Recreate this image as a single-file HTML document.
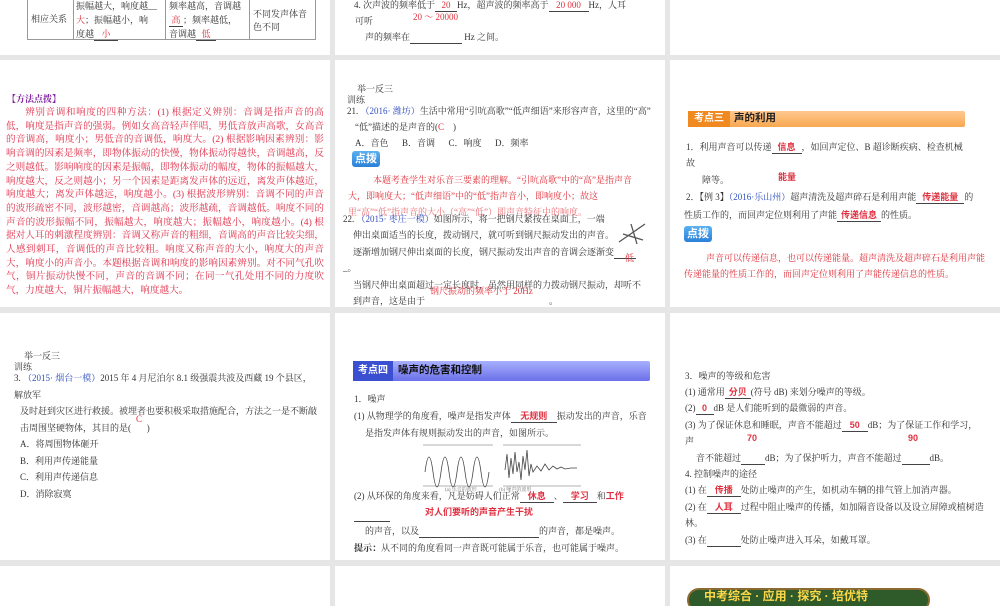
<!DOCTYPE html>
<html><head><meta charset="utf-8"><style>
*{margin:0;padding:0;box-sizing:border-box}
body{width:1000px;height:600px;background:#e6e6e6;position:relative;overflow:hidden;font-family:"Liberation Serif","Noto Serif CJK SC",serif;color:#333}
.s{position:absolute;background:#fff;overflow:hidden}
.t{position:absolute;white-space:nowrap;font-size:9px;line-height:11px}
.r{color:#e0303a}
.b{color:#3050c0}
.red{color:#e03040;font-weight:bold;font-family:"Liberation Sans","Noto Sans CJK SC",sans-serif}
.u{display:inline-block;border-bottom:1px solid #444;text-align:center}
.badge{position:absolute;background:linear-gradient(#5ab0f0,#2a80d8);color:#fff;font-weight:bold;font-size:11px;font-family:"Liberation Sans","Noto Sans CJK SC",sans-serif;padding:1px 3px;border-radius:3px;line-height:14px}
</style></head><body>
<!-- row1 -->
<div class="s" style="left:0;top:0;width:330px;height:55px">
 <div style="position:absolute;left:27px;top:-2px;width:289px;height:42px;border:1px solid #999"></div>
 <div style="position:absolute;left:73px;top:0;width:1px;height:40px;background:#999"></div>
 <div style="position:absolute;left:165px;top:0;width:1px;height:40px;background:#999"></div>
 <div style="position:absolute;left:249px;top:0;width:1px;height:40px;background:#999"></div>
 <div class="t" style="left:31px;top:14px">相应关系</div>
 <div class="t" style="left:76px;top:1px">振幅越大，响度越__</div>
 <div class="t" style="left:76px;top:15px"><span class="r">大</span>；振幅越小，响</div>
 <div class="t" style="left:76px;top:29px">度越<span class="u r" style="width:24px">小</span></div>
 <div class="t" style="left:169px;top:1px">频率越高，音调越</div>
 <div class="t" style="left:169px;top:15px"><span class="u r" style="width:14px">高</span>；频率越低，</div>
 <div class="t" style="left:169px;top:29px">音调越<span class="u r" style="width:20px">低</span></div>
 <div class="t" style="left:253px;top:9px">不同发声体音</div>
 <div class="t" style="left:253px;top:22px">色不同</div>
</div>
<div class="s" style="left:335px;top:0;width:330px;height:55px">
 <div class="t" style="left:19px;top:0">4. 次声波的频率低于<span class="u r" style="width:22px">20</span>Hz，超声波的频率高于<span class="u r" style="width:40px">20 000</span>Hz，人耳</div>
 <div class="t" style="left:20px;top:16px">可听</div>
 <div class="t r" style="left:78px;top:12px">20 ～ 20000</div>
 <div class="t" style="left:30px;top:32px">声的频率在<span class="u" style="width:52px">&nbsp;</span> Hz 之间。</div>
</div>
<div class="s" style="left:670px;top:0;width:330px;height:55px"></div>

<!-- row2 -->
<div class="s" style="left:0;top:60px;width:330px;height:247px">
 <div class="t" style="left:7px;top:34px;color:#8020a0;font-weight:bold">【方法点拨】</div>
 <div style="position:absolute;left:6px;top:46px;width:318px;font-size:9.6px;line-height:13.7px;color:#e0304a;text-indent:2em;text-align:justify">辨别音调和响度的四种方法：(1) 根据定义辨别：音调是指声音的高低，响度是指声音的强弱。例如女高音轻声伴唱，男低音放声高歌，女高音的音调高，响度小；男低音的音调低，响度大。(2) 根据影响因素辨别：影响音调的因素是频率，即物体振动的快慢，物体振动得越快，音调越高，反之则越低。影响响度的因素是振幅，即物体振动的幅度，物体的振幅越大，响度越大，反之则越小；另一个因素是距离发声体的远近，离发声体越近，响度越大；离发声体越远，响度越小。(3) 根据波形辨别：音调不同的声音的波形疏密不同，波形越密，音调越高；波形越疏，音调越低。响度不同的声音的波形振幅不同，振幅越大，响度越大；振幅越小，响度越小。(4) 根据对人耳的刺激程度辨别：音调又称声音的粗细，音调高的声音比较尖细，人感到刺耳，音调低的声音比较粗。响度又称声音的大小，响度大的声音大，响度小的声音小。本题根据音调和响度的影响因素辨别。对不同气孔吹气，铜片振动快慢不同，声音的音调不同；在同一气孔处用不同的力度吹气，力度越大，铜片振幅越大，响度越大。</div>
</div>
<div class="s" style="left:335px;top:60px;width:330px;height:247px">
 <div class="t" style="left:22px;top:24px">举一反三</div>
 <div class="t" style="left:12px;top:35px">训练</div>
 <div class="t" style="left:12px;top:46px">21. <span class="b">（2016· 潍坊）</span>生活中常用“引吭高歌”“低声细语”来形容声音，这里的“高”</div>
 <div class="t" style="left:20px;top:62px">“低”描述的是声音的(<span class="r">C</span>&nbsp;&nbsp;&nbsp;&nbsp;)</div>
 <div class="t" style="left:20px;top:78px">A．音色&nbsp;&nbsp;&nbsp;&nbsp;&nbsp;&nbsp;B．音调&nbsp;&nbsp;&nbsp;&nbsp;&nbsp;&nbsp;C．响度&nbsp;&nbsp;&nbsp;&nbsp;&nbsp;&nbsp;D．频率</div>
 <div class="badge" style="left:17px;top:91px">点拨</div>
 <div class="t r" style="left:38px;top:115px">本题考查学生对乐音三要素的理解。“引吭高歌”中的“高”是指声音</div>
 <div class="t r" style="left:13px;top:131px">大，即响度大；“低声细语”中的“低”指声音小，即响度小；故这</div>
 <div class="t r" style="left:13px;top:147px;opacity:.7">里“高”“低”指声音的大小（“高”“低”）即声音特征中的响度。</div>
 <div class="t" style="left:8px;top:154px">22. <span class="b">（2015· 枣庄一模）</span>如图所示，将一把钢尺紧按在桌面上，一端</div>
 <div class="t" style="left:18px;top:170px">伸出桌面适当的长度，拨动钢尺，就可听到钢尺振动发出的声音。</div>
 <div class="t" style="left:18px;top:187px">逐渐增加钢尺伸出桌面的长度，钢尺振动发出声音的音调会逐渐变<span class="u" style="width:22px">&nbsp;</span></div>
 <div class="t r" style="left:290px;top:193px">低</div>
 <div class="t" style="left:8px;top:203px">_。</div>
 <div class="t" style="left:18px;top:220px">当钢尺伸出桌面超过一定长度时，虽然用同样的力拨动钢尺振动，却听不</div>
 <div class="t r" style="left:95px;top:226px">钢尺振动的频率小于 20Hz</div>
 <div class="t" style="left:18px;top:236px">到声音，这是由于<span class="u" style="width:124px">&nbsp;</span>。</div>
 <svg style="position:absolute;left:282px;top:160px" width="30" height="26"><path d="M2 22 L28 4 M6 14 L26 20 M14 4 L20 24" stroke="#555" stroke-width="1.3" fill="none"/></svg>
</div>
<div class="s" style="left:670px;top:60px;width:330px;height:247px">
 <div style="position:absolute;left:18px;top:51px;width:277px;height:16px;background:linear-gradient(#ffc890,#f8a850);border-radius:2px"></div>
 <div style="position:absolute;left:18px;top:51px;width:42px;height:16px;background:#f08a20;color:#fff;font-weight:bold;font-size:10px;line-height:16px;text-align:center;font-family:'Liberation Sans','Noto Sans CJK SC',sans-serif">考点三</div>
 <div class="t" style="left:64px;top:53px;font-weight:bold;font-size:10.5px;color:#222;font-family:'Liberation Sans','Noto Sans CJK SC',sans-serif">声的利用</div>
 <div class="t" style="left:16px;top:82px">1．利用声音可以传递<span class="u" style="width:30px"><span class="red">信息</span></span>，如回声定位、B 超诊断疾病、检查机械</div>
 <div class="t" style="left:16px;top:98px">故</div>
 <div class="t" style="left:32px;top:115px">障等。</div>
 <div class="t red" style="left:108px;top:112px">能量</div>
 <div class="t" style="left:16px;top:132px">2．【例 3】<span class="b">（2016·乐山州）</span>超声清洗及超声碎石是利用声能<span class="u" style="width:48px"><span class="red">传递能量</span></span>的</div>
 <div class="t" style="left:14px;top:150px">性质工作的，而回声定位则利用了声能<span class="u" style="width:44px"><span class="red">传递信息</span></span>的性质。</div>
 <div class="badge" style="left:14px;top:166px">点拨</div>
 <div class="t r" style="left:36px;top:193px">声音可以传递信息，也可以传递能量。超声清洗及超声碎石是利用声能</div>
 <div class="t r" style="left:14px;top:209px">传递能量的性质工作的，而回声定位则利用了声能传递信息的性质。</div>
</div>

<!-- row3 -->
<div class="s" style="left:0;top:313px;width:330px;height:247px">
 <div class="t" style="left:24px;top:38px">举一反三</div>
 <div class="t" style="left:14px;top:49px">训练</div>
 <div class="t" style="left:14px;top:60px">3. <span class="b">（2015· 烟台一模）</span>2015 年 4 月尼泊尔 8.1 级强震共波及西藏 19 个县区，</div>
 <div class="t" style="left:14px;top:77px">解放军</div>
 <div class="t" style="left:20px;top:93px">及时赶到灾区进行救援。被埋者也要积极采取措施配合，方法之一是不断敲</div>
 <div class="t r" style="left:136px;top:101px">C</div>
 <div class="t" style="left:20px;top:110px">击周围坚硬物体，其目的是(&nbsp;&nbsp;&nbsp;&nbsp;&nbsp;&nbsp;&nbsp;)</div>
 <div class="t" style="left:20px;top:126px">A．将周围物体砸开</div>
 <div class="t" style="left:20px;top:143px">B．利用声传递能量</div>
 <div class="t" style="left:20px;top:159px">C．利用声传递信息</div>
 <div class="t" style="left:20px;top:176px">D．消除寂寞</div>
</div>
<div class="s" style="left:335px;top:313px;width:330px;height:247px">
 <div style="position:absolute;left:18px;top:48px;width:297px;height:20px;background:linear-gradient(#a8b0ff,#6a70e8);border-radius:2px"></div>
 <div style="position:absolute;left:18px;top:48px;width:40px;height:20px;background:#3a50d0;color:#fff;font-weight:bold;font-size:10px;line-height:20px;text-align:center;font-family:'Liberation Sans','Noto Sans CJK SC',sans-serif">考点四</div>
 <div class="t" style="left:63px;top:52px;font-weight:bold;font-size:10.5px;color:#111;font-family:'Liberation Sans','Noto Sans CJK SC',sans-serif">噪声的危害和控制</div>
 <div class="t" style="left:19px;top:81px">1．噪声</div>
 <div class="t" style="left:19px;top:98px">(1) 从物理学的角度看，噪声是指发声体<span class="u" style="width:46px"><span class="red">无规则</span></span>振动发出的声音，乐音</div>
 <div class="t" style="left:30px;top:115px">是指发声体有规则振动发出的声音，如图所示。</div>
 <svg style="position:absolute;left:86px;top:131px" width="162" height="48">
  <line x1="2" y1="1" x2="72" y2="1" stroke="#666" stroke-width=".6"/><line x1="2" y1="42" x2="72" y2="42" stroke="#666" stroke-width=".6"/>
  <path d="M4 28 Q8 -2 12 28 T20 28 T28 28 T36 28 T44 28 T52 28 T60 28 T68 28" stroke="#444" fill="none" stroke-width=".8"/>
  <line x1="82" y1="1" x2="160" y2="1" stroke="#666" stroke-width=".6"/><line x1="82" y1="42" x2="160" y2="42" stroke="#666" stroke-width=".6"/>
  <path d="M84 26 L86 10 L88 34 L90 14 L92 30 L94 8 L96 28 L98 18 L100 36 L102 12 L104 26 L106 6 L108 32 L110 20 L112 28 L116 22 L120 27 L124 20 L128 26 L132 22 L136 25 L140 23 L144 25 L150 24 L156 24" stroke="#444" fill="none" stroke-width=".8"/>
 </svg>
 <div class="t" style="left:110px;top:172px;font-size:5px;color:#777">(a) 乐音的波形&nbsp;&nbsp;&nbsp;&nbsp;&nbsp;&nbsp;&nbsp;&nbsp;&nbsp;&nbsp;&nbsp;&nbsp;&nbsp;&nbsp;&nbsp;&nbsp;&nbsp;&nbsp;(b) 噪声的波形</div>
 <div class="t" style="left:19px;top:178px">(2) 从环保的角度来看，凡是妨碍人们正常<span class="u" style="width:34px"><span class="red">休息</span></span>、<span class="u" style="width:34px"><span class="red">学习</span></span>和<span class="red">工作</span></div>
 <div class="t red" style="left:90px;top:194px">对人们要听的声音产生干扰</div>
 <div class="t" style="left:19px;top:197px"><span class="u" style="width:36px">&nbsp;</span></div>
 <div class="t" style="left:30px;top:213px">的声音，以及<span class="u" style="width:120px">&nbsp;</span>的声音，都是噪声。</div>
 <div class="t" style="left:19px;top:230px"><b>提示：</b>从不同的角度看同一声音既可能属于乐音，也可能属于噪声。</div>
</div>
<div class="s" style="left:670px;top:313px;width:330px;height:247px">
 <div class="t" style="left:15px;top:58px">3．噪声的等级和危害</div>
 <div class="t" style="left:15px;top:74px">(1) 通常用<span class="u" style="width:26px"><span class="red">分贝</span></span>(符号 dB) 来划分噪声的等级。</div>
 <div class="t" style="left:15px;top:90px">(2)<span class="u" style="width:18px"><span class="red">0</span></span>dB 是人们能听到的最微弱的声音。</div>
 <div class="t" style="left:15px;top:107px">(3) 为了保证休息和睡眠，声音不能超过<span class="u" style="width:26px"><span class="red">50</span></span>dB；为了保证工作和学习，</div>
 <div class="t" style="left:15px;top:123px">声</div>
 <div class="t red" style="left:77px;top:120px">70</div>
 <div class="t red" style="left:238px;top:120px">90</div>
 <div class="t" style="left:26px;top:140px">音不能超过<span class="u" style="width:24px">&nbsp;</span>dB；为了保护听力，声音不能超过<span class="u" style="width:28px">&nbsp;</span>dB。</div>
 <div class="t" style="left:15px;top:156px">4. 控制噪声的途径</div>
 <div class="t" style="left:15px;top:172px">(1) 在<span class="u" style="width:34px"><span class="red">传播</span></span>处防止噪声的产生，如机动车辆的排气管上加消声器。</div>
 <div class="t" style="left:15px;top:189px">(2) 在<span class="u" style="width:34px"><span class="red">人耳</span></span>过程中阻止噪声的传播，如加隔音设备以及设立屏障或植树造</div>
 <div class="t" style="left:15px;top:205px">林。</div>
 <div class="t" style="left:15px;top:222px">(3) 在<span class="u" style="width:34px">&nbsp;</span>处防止噪声进入耳朵，如戴耳罩。</div>
</div>

<!-- row4 -->
<div class="s" style="left:0;top:566px;width:330px;height:40px"></div>
<div class="s" style="left:335px;top:566px;width:330px;height:40px"></div>
<div class="s" style="left:670px;top:566px;width:330px;height:40px">
 <div style="position:absolute;left:17px;top:22px;width:243px;height:24px;background:#2f5a2a;border:2px solid #8a6a30;border-radius:12px"></div>
 <div class="t" style="left:34px;top:25px;color:#ffd84a;font-weight:bold;font-size:12px;font-family:'Liberation Sans','Noto Sans CJK SC',sans-serif">中考综合 · 应用 · 探究 · 培优特</div>
</div>
</body></html>
